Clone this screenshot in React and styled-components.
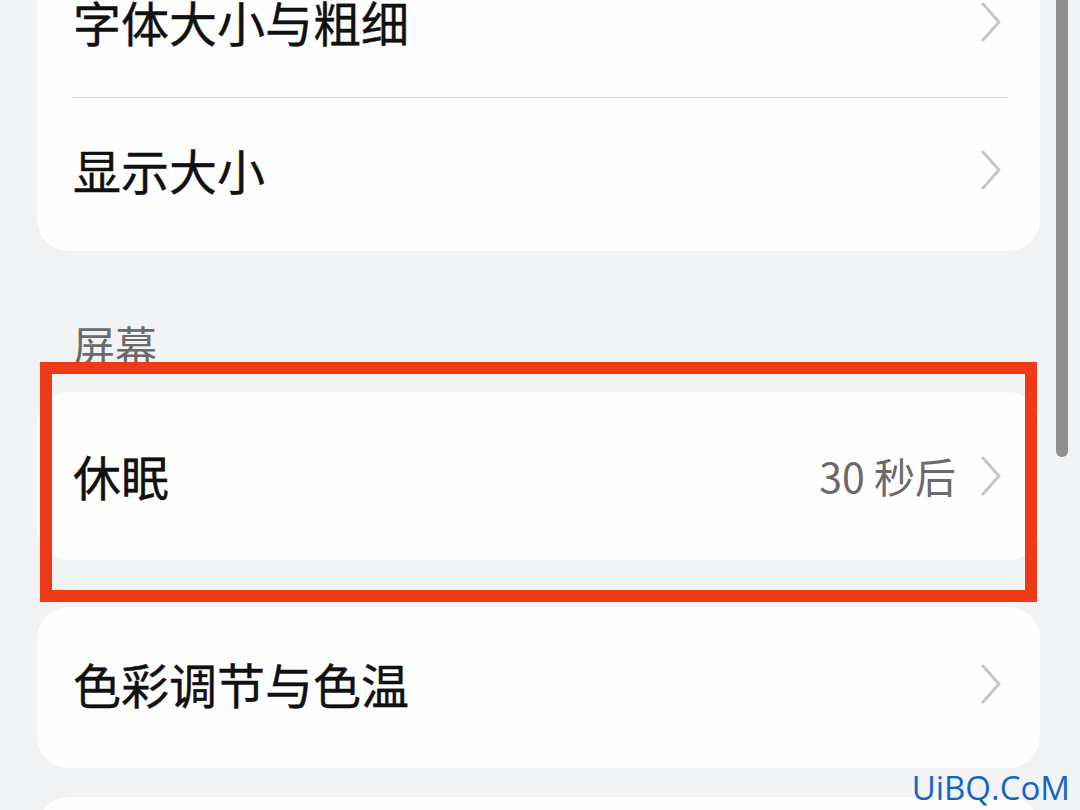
import React from 'react';
import styled, { createGlobalStyle } from 'styled-components';

const GlobalStyle = createGlobalStyle`
  html, body {
    margin: 0;
    padding: 0;
    background: #f2f3f5;
  }
  body {
    font-family: "Noto Sans CJK SC", "Noto Sans", sans-serif;
  }
`;

const Chevron = () => (
  <ChevronSvg viewBox="0 0 22 40" width="22" height="40">
    <path d="M3 2 L19 20 L3 38" fill="none" stroke="#c6c6c6" strokeWidth="3" strokeLinecap="round" strokeLinejoin="round" />
  </ChevronSvg>
);

const App = () => (
  <>
    <GlobalStyle />
    <Screen>
      <Content>
        <Card>
          <Row h={151}>
            <Title>字体大小与粗细</Title>
            <Chevron />
          </Row>
          <Divider />
          <Row h={153} pb={10}>
            <Title>显示大小</Title>
            <Chevron />
          </Row>
        </Card>

        <SectionHeader>屏幕</SectionHeader>

        <Card>
          <Row h={168}>
            <Title>休眠</Title>
            <Right>
              <Value>30 秒后</Value>
              <Chevron />
            </Right>
          </Row>
        </Card>

        <Card gap={47}>
          <Row h={161} pb={8}>
            <Title>色彩调节与色温</Title>
            <Chevron />
          </Row>
        </Card>

        <Card gap={29}>
          <Row h={160} />
        </Card>
      </Content>

      <Highlight />
      <ScrollThumb />
      <Watermark>UiBQ.CoM</Watermark>
    </Screen>
  </>
);

export default App;

const Screen = styled.div`
  position: relative;
  width: 1080px;
  height: 810px;
  overflow: hidden;
  background: #f2f3f5;
`;

const Content = styled.div`
  display: flex;
  flex-direction: column;
  margin-top: -54px;
  padding: 0 40px 0 37px;
`;

const Card = styled.div`
  background: #fefefe;
  border-radius: 32px;
  margin-top: ${(p) => (p.gap ? `${p.gap}px` : '0')};
  display: flex;
  flex-direction: column;
`;

const Row = styled.div`
  box-sizing: border-box;
  height: ${(p) => p.h}px;
  display: flex;
  align-items: center;
  justify-content: space-between;
  padding: 0 38px ${(p) => p.pb || 0}px 36px;
`;

const Title = styled.span`
  font-size: 48px;
  font-weight: 400;
  color: #111;
  line-height: 1.2;
  -webkit-text-stroke: 0.4px #111;
`;

const Right = styled.div`
  display: flex;
  align-items: center;
  gap: 24px;
`;

const Value = styled.span`
  font-size: 41px;
  color: #6a6a6a;
  line-height: 1.2;
`;

const ChevronSvg = styled.svg`
  display: block;
  flex-shrink: 0;
`;

const Divider = styled.div`
  height: 1px;
  background: #d6d6d6;
  margin: 0 32px 0 35px;
`;

const SectionHeader = styled.div`
  margin: 68px 0 23px 36px;
  height: 50px;
  font-size: 42px;
  line-height: 50px;
  color: #6b6b6b;
`;

const Highlight = styled.div`
  position: absolute;
  left: 40px;
  top: 362px;
  width: 997px;
  height: 240px;
  box-sizing: border-box;
  border: 12px solid #ef3a18;
  pointer-events: none;
`;

const ScrollThumb = styled.div`
  position: absolute;
  left: 1056px;
  top: -10px;
  width: 12px;
  height: 467px;
  border-radius: 6px;
  background: #8f8f8f;
`;

const Watermark = styled.div`
  position: absolute;
  right: 10px;
  bottom: 0px;
  font-family: "Open Sans", "DejaVu Sans", sans-serif;
  font-size: 33px;
  line-height: 44px;
  color: #1763c6;
`;
